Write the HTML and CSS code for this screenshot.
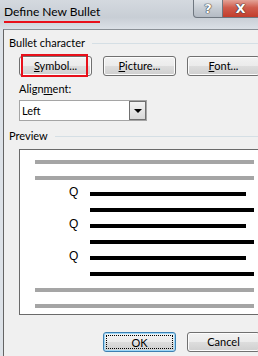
FILE: index.html
```html
<!DOCTYPE html>
<html lang="en">
<head>
    <meta charset="UTF-8">
    <title>Define New Bullet</title>
    <link rel="stylesheet" href="styles.css">
</head>
<body>
    <div class="window">
        <div class="titlebar">
            <span class="title">Define New Bullet</span>
            <div class="caption-buttons">
                <div class="cap-btn help">?</div>
                <div class="cap-btn close">X</div>
            </div>
        </div>
        <div class="dialog">
            <div class="group-head">
                <span>Bullet character</span>
                <div class="group-line"></div>
            </div>
            <div class="btn-row">
                <div class="btn marked"><span><u>S</u>ymbol...</span><div class="red-box"></div></div>
                <div class="btn"><u>P</u>icture...</div>
                <div class="btn"><u>F</u>ont...</div>
            </div>
            <div class="field-label">Align<u>m</u>ent:</div>
            <div class="select">
                <span class="select-value">Left</span>
                <div class="select-arrow"><div class="arrow"></div></div>
            </div>
            <div class="group-head preview-head">
                <span>Preview</span>
                <div class="group-line"></div>
            </div>
            <div class="preview">
                <div class="row"><div class="bar gray"></div></div>
                <div class="row"><div class="bar gray"></div></div>
                <div class="row item"><span class="bullet">Q</span><div class="bar black short"></div></div>
                <div class="row item"><span class="bullet"></span><div class="bar black"></div></div>
                <div class="row item"><span class="bullet">Q</span><div class="bar black short"></div></div>
                <div class="row item"><span class="bullet"></span><div class="bar black"></div></div>
                <div class="row item"><span class="bullet">Q</span><div class="bar black short"></div></div>
                <div class="row item"><span class="bullet"></span><div class="bar black"></div></div>
                <div class="row"><div class="bar gray"></div></div>
                <div class="row"><div class="bar gray"></div></div>
            </div>
            <div class="btn-row footer-row">
                <div class="btn default"><span class="focus">OK</span></div>
                <div class="btn">Cancel</div>
            </div>
        </div>
    </div>
</body>
</html>
```

FILE: styles.css
```css
body {
    margin: 0;
    background-color: #f0f0f0;
    font-family: Lato, 'Noto Sans', sans-serif;
    font-size: 11px;
    color: #000;
    overflow: hidden;
}
.window {
    width: 258px;
    height: 356px;
    overflow: hidden;
    background-color: #dde2e8;
    display: flex;
    flex-direction: column;
}
.titlebar {
    height: 29px;
    flex-shrink: 0;
    display: flex;
    align-items: flex-start;
    background: linear-gradient(to bottom, #d4d9df 0%, #c8ced5 60%, #dbe0e6 100%);
}
.title {
    margin: 4px 0 0 4px;
    padding-bottom: 1px;
    font-size: 12px;
    line-height: 16px;
    color: #000;
    border-bottom: 2px solid #e8101a;
}
.caption-buttons {
    margin-left: auto;
    display: flex;
    margin-right: -9px;
}
.cap-btn {
    height: 18px;
    box-sizing: border-box;
    border: 1px solid #6f7780;
    border-top: none;
    color: #fff;
    font-family: 'DejaVu Sans', sans-serif;
    font-weight: bold;
    font-size: 13px;
    line-height: 17px;
    text-align: center;
    text-shadow: 0 0 1px #333, 0 0 1px #333, 0 0 1px #333;
}
.help {
    width: 30px;
    border-radius: 0 0 0 4px;
    background: linear-gradient(to bottom, #dfe3e8 0%, #c6ccd3 50%, #b4bbc4 100%);
}
.close {
    width: 44px;
    border-left: none;
    padding-right: 8px;
    background: linear-gradient(to bottom, #e3a397 0%, #cf5c4c 45%, #c23d2c 100%);
}
.dialog {
    flex: 1;
    margin-left: 3px;
    border-left: 1px solid #646464;
    border-top: 1px solid #8a9096;
    background-color: #f0f0f0;
    display: flex;
    flex-direction: column;
}
.group-head {
    display: flex;
    align-items: center;
    height: 14px;
    line-height: 14px;
    margin-top: 6px;
    padding-left: 5px;
}
.group-line {
    flex: 1;
    margin-left: 7px;
    border-top: 1px solid #d5dfe5;
}
.btn-row {
    display: flex;
    gap: 11px;
    margin-top: 6px;
    padding-left: 15px;
}
.btn {
    position: relative;
    flex-shrink: 0;
    width: 73px;
    height: 20px;
    box-sizing: border-box;
    border: 1px solid #707070;
    border-radius: 3px;
    background: linear-gradient(to bottom, #f2f2f2 0%, #ebebeb 50%, #dddddd 51%, #cfcfcf 100%);
    box-shadow: inset 0 0 0 1px #fcfcfc;
    text-align: center;
    line-height: 17px;
}
.red-box {
    position: absolute;
    left: 1px;
    top: -3px;
    width: 67px;
    height: 23px;
    box-sizing: border-box;
    border: 2px solid #e8101a;
}
.field-label {
    margin-top: 6px;
    padding-left: 15px;
    line-height: 14px;
}
.select {
    margin: 4px 0 0 15px;
    width: 128px;
    height: 21px;
    box-sizing: border-box;
    border: 1px solid #a5a5a5;
    background-color: #fff;
    display: flex;
    align-items: center;
}
.select-value {
    padding-left: 2px;
    flex: 1;
}
.select-arrow {
    width: 17px;
    height: 19px;
    box-sizing: border-box;
    border: 1px solid #707070;
    background: linear-gradient(to bottom, #f2f2f2, #d8d8d8);
    display: flex;
    align-items: center;
    justify-content: center;
}
.arrow {
    width: 0;
    height: 0;
    border-left: 4px solid transparent;
    border-right: 4px solid transparent;
    border-top: 4px solid #000;
}
.preview-head {
    margin-top: 8px;
}
.preview {
    margin: 6px 0 0 15px;
    width: 250px;
    box-sizing: border-box;
    border: 1px solid #6a6a6a;
    border-right: none;
    background-color: #fff;
    padding: 4px 0 0 15px;
    flex-shrink: 0;
}
.row {
    height: 16px;
    display: flex;
    align-items: center;
}
.item {
    padding-left: 34px;
}
.bullet {
    width: 21px;
    font-family: 'Liberation Sans', sans-serif;
    font-size: 12px;
    line-height: 12px;
    margin-bottom: 4px;
}
.bar {
    height: 4px;
}
.gray {
    width: 219px;
    background-color: #a5a5a5;
}
.black {
    width: 164px;
    background-color: #000;
}
.black.short {
    width: 156px;
}
.footer-row {
    margin-top: 17px;
    padding-left: 99px;
}
.default {
    border-color: #3c7fb1;
    box-shadow: inset 0 0 0 1px #9ed8f8;
    padding: 2px;
}
.focus {
    display: block;
    height: 14px;
    line-height: 13px;
    box-sizing: border-box;
    border: 1px dotted #000;
}
```
